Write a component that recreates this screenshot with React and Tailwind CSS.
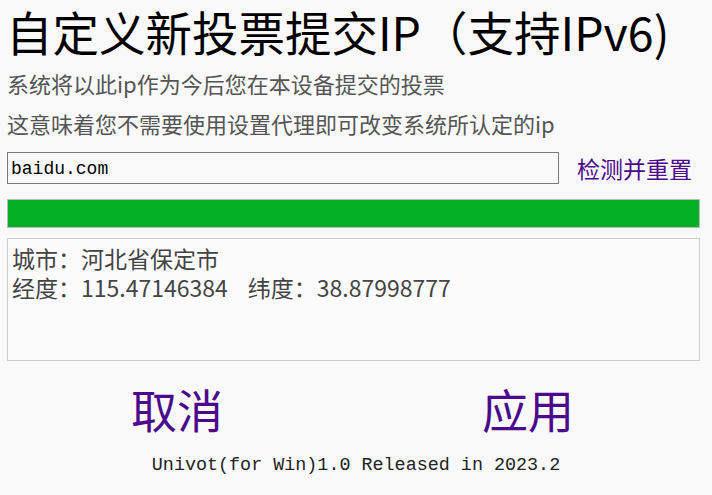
export default function App() {
    return (
        <div className="w-[712px] h-[495px] bg-[#f9f9f9] overflow-hidden font-['Noto_Sans_CJK_SC','Noto_Sans',sans-serif]">
            {/* Title */}
            <h1 className="px-[6px] -mt-[3px] text-[46.5px] leading-[68px] text-black whitespace-nowrap">
                自定义新投票提交IP（支持IPv6)
            </h1>
            {/* Description */}
            <div className="px-[7px] text-[22px] text-[#555555]">
                <p className="leading-[40px] -mt-[2px]">系统将以此ip作为今后您在本设备提交的投票</p>
                <p className="leading-[40px]">这意味着您不需要使用设置代理即可改变系统所认定的ip</p>
            </div>
            {/* Domain input */}
            <div className="flex items-center px-[7px] mt-[9px]">
                <input
                    defaultValue="baidu.com"
                    className="w-[552px] h-[32px] border border-[#777777] bg-[#f9f9f9] px-[3px] pt-[2px] text-[18px] text-black font-['Liberation_Mono','Noto_Sans_CJK_SC',monospace] outline-none"
                />
                <a className="ml-[18px] text-[23px] text-[#4b0a8c] leading-none">检测并重置</a>
            </div>
            {/* Progress bar */}
            <div className="ml-[7px] w-[693px] mt-[15px] h-[29px] border border-[#bbbbbb] bg-[#05b025]"></div>
            {/* Result box */}
            <div className="ml-[7px] w-[693px] mt-[10px] h-[123px] border border-[#cccccc] bg-[#fbfbfb] px-[4px] pt-[5px] text-[23px] leading-[29px] text-[#444444]">
                <p>城市：河北省保定市</p>
                <p>
                    经度：115.47146384
                    <span className="ml-[20px]">纬度：38.87998777</span>
                </p>
            </div>
            {/* Buttons */}
            <div className="flex mt-[17px] text-[46px] leading-[60px] text-[#4b0a8c]">
                <button className="ml-[131px]">取消</button>
                <button className="ml-[259px]">应用</button>
            </div>
            {/* Footer */}
            <p className="mt-[15px] text-center text-[18.4px] leading-[26px] text-[#222222] font-['Liberation_Mono',monospace]">
                Univot(for Win)1.0 Released in 2023.2
            </p>
        </div>
    )
}
